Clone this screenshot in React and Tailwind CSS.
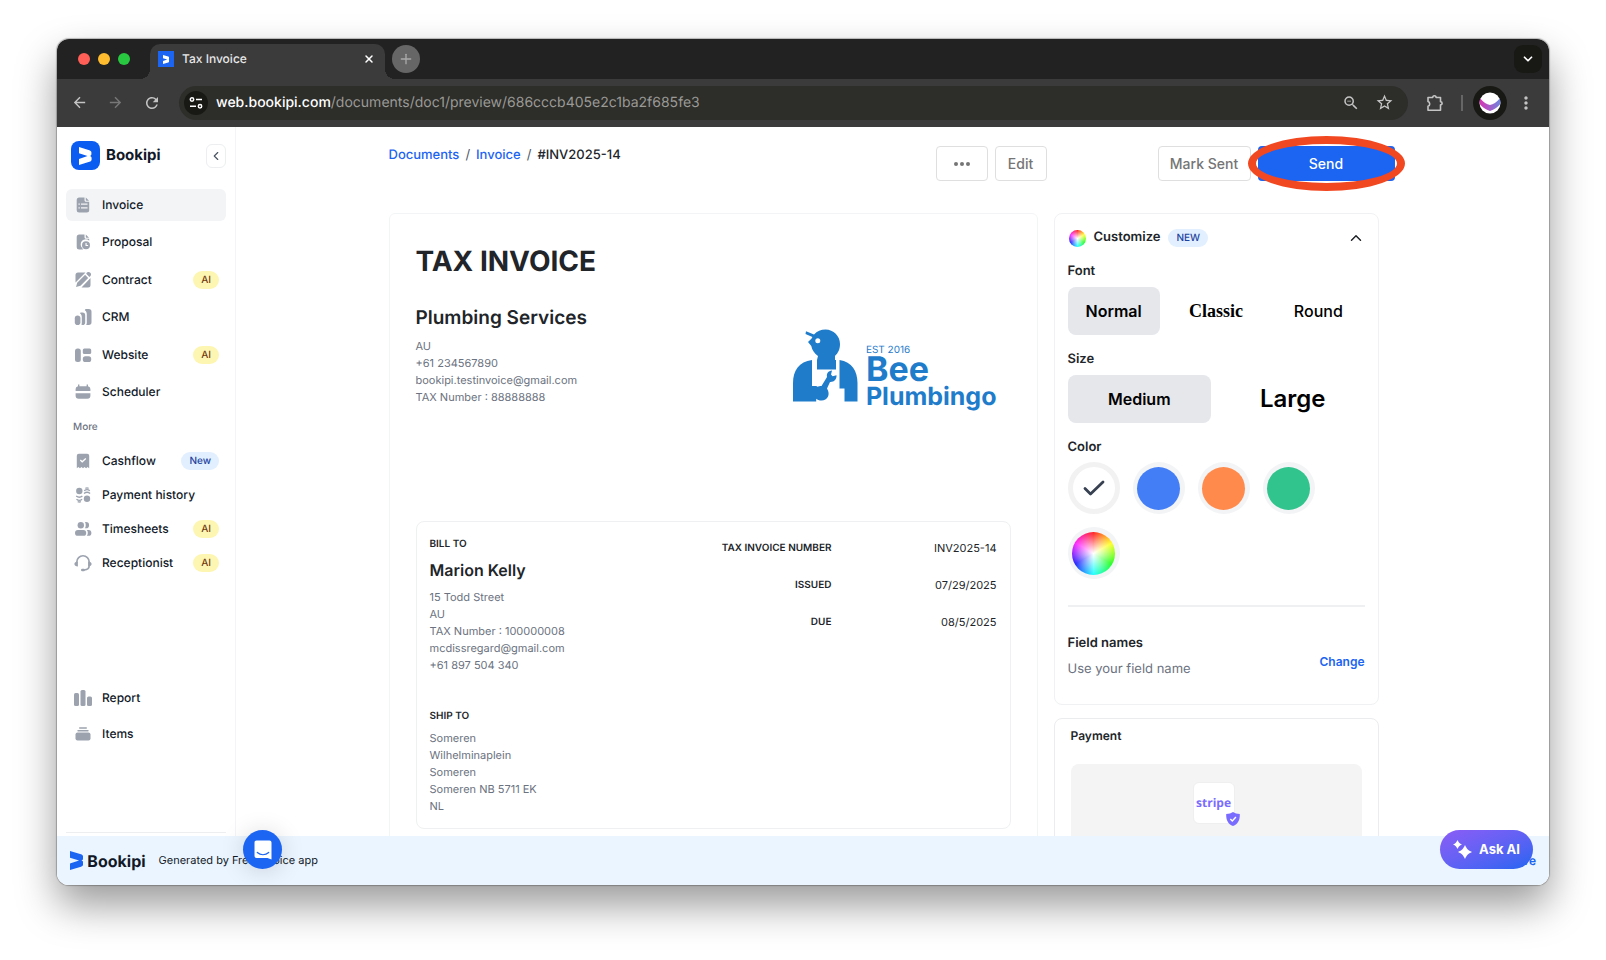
import React from 'react';
import {ChevronDown, ChevronLeft, ChevronUp, X, Plus} from 'lucide-react';
import {MdArrowBack, MdArrowForward, MdRefresh, MdStarOutline, MdMoreVert, MdZoomOut} from 'react-icons/md';

const icons = {
  invoice: (
    <>
      <path d="M5.2 1.5h5.3v2.8c0 .9.6 1.5 1.5 1.5h3.2v8.2a2.5 2.5 0 0 1-2.5 2.5H5.2A2.5 2.5 0 0 1 2.7 14V4a2.5 2.5 0 0 1 2.5-2.500z"/>
      <path d="M11.800 1.500l3.200 3.200h-2.400a.8.8 0 0 1-.8-.8z"/>
      <path d="M4.500 8.200h1.300M7 8.200h6.500M4.500 11.800h1.300M7 11.800h6.500" stroke="#f3f4f6" strokeWidth="1.200" fill="none"/>
    </>
  ),
  proposal: (
    <>
      <path d="M5.200 1.500h5.300v2.800c0 .9.600 1.500 1.500 1.500h3.200v1.900a5 5 0 0 0-7 7.300l.9 1.500H5.200A2.500 2.500 0 0 1 2.700 14V4a2.500 2.500 0 0 1 2.500-2.500z"/>
      <path d="M11.800 1.500l3.200 3.200h-2.400a.8.8 0 0 1-.8-.8z"/>
      <path fillRule="evenodd" d="M12 8.300a4 4 0 1 1 0 8 4 4 0 0 1 0-8zm-.5 1.700v2.900h2.600v-1h-1.500V10z"/>
    </>
  ),
  contract: (
    <>
      <path d="M4 1.500h7.500L1.500 11.500V4A2.500 2.500 0 0 1 4 1.500zM16.500 7v7a2.500 2.500 0 0 1-2.500 2.500H7.500z"/>
      <path d="M2 16l1.300-4.500 7.700-7.700 3.200 3.200-7.700 7.700z"/>
      <path d="M1.500 12.700L12 2.200M6.300 16.500L16.500 6.300" stroke="#fff" strokeWidth="1" fill="none"/>
      <path d="M12.200 2.700a2.500 2.500 0 1 1 3.200 3.200z"/>
    </>
  ),
  crm: (
    <>
      <rect x=".8" y="7.500" width="5.600" height="9.500" rx="2.800"/>
      <path d="M6.500 4.500h2A2.700 2.700 0 0 1 11.200 7.200v7A2.700 2.700 0 0 1 8.500 17c-.7 0-1.200-.2-1.200-.2.500-.8.500-1.500.5-2.500V9.500C7.800 7.500 7.300 6.300 6 5.600z"/>
      <path d="M11.500 1h3.300a2.700 2.700 0 0 1 2.700 2.700v10.600a2.700 2.700 0 0 1-2.700 2.700h-2.600c.5-.8.600-1.500.600-2.500V6.500c0-2-.500-3.400-2-4.300z"/>
    </>
  ),
  website: (
    <>
      <rect x="1" y="2.500" width="5.800" height="13.500" rx="2.500"/>
      <rect x="8.800" y="2.500" width="8.400" height="5.500" rx="1.500"/>
      <rect x="8.800" y="10.200" width="8.400" height="5.800" rx="2.600"/>
    </>
  ),
  scheduler: (
    <>
      <path d="M4 1.500h1.400v1.700h7.200V1.500H14v1.800a2.800 2.800 0 0 1 2.400 2.800v2H1.600v-2A2.800 2.800 0 0 1 4 3.300z"/>
      <path d="M1.600 10.200h14.800v2.500a3 3 0 0 1-3 3H4.600a3 3 0 0 1-3-3z"/>
    </>
  ),
  cashflow: (
    <>
      <path d="M4.800 1.800h8.400a2 2 0 0 1 2 2v12.400l-1.600-1.200-1.500 1.200-1.600-1.200L9 16.200 7.500 15l-1.600 1.200L4.400 15l-1.600 1.200V3.800a2 2 0 0 1 2-2z"/>
      <path d="M6.300 8l1.900 1.800L11.800 6.600" stroke="#fff" strokeWidth="1.300" fill="none"/>
    </>
  ),
  history: (
    <>
      <circle cx="5.300" cy="5" r="3.200"/>
      <circle cx="13" cy="12.700" r="3.200"/>
      <path d="M2.200 10c2 1.600 4.300 1.600 6.200 0M2.500 13.200c1.800 1.400 3.900 1.400 5.600 0M3.700 15.600c1 .5 2.200.5 3.200 0M10 7.500c2-1.600 4.200-1.600 6.100 0M10.200 4.700c1.800-1.400 3.900-1.400 5.600 0M11.400 2.300c1-.5 2.200-.5 3.200 0" fill="none" stroke="currentColor" strokeWidth="1.300"/>
    </>
  ),
  timesheets: (
    <>
      <circle cx="6.800" cy="5.200" r="3.200"/>
      <path d="M11 2.100h1a3.100 3.100 0 0 1 0 6.200h-1c1-1.700 1-4.500 0-6.200z"/>
      <rect x="1" y="10" width="11.200" height="5.800" rx="2.900"/>
      <path d="M12.800 10h1.700a2.900 2.900 0 0 1 0 5.800h-1.700c1.400-1.600 1.400-4.200 0-5.800z"/>
    </>
  ),
  receptionist: (
    <>
      <path d="M2.800 9V8a6.200 6.200 0 0 1 12.400 0v3.500c0 2.500-2 4.300-5 4.500" fill="none" stroke="currentColor" strokeWidth="1.600"/>
      <path d="M3.900 7.500v5C1.700 12.500.4 11.300.4 10s1.300-2.500 3.500-2.500zM14.100 7.500v5c2.200 0 3.500-1.200 3.500-2.500s-1.300-2.500-3.500-2.500z"/>
      <rect x="7" y="14.800" width="4" height="2.400" rx="1.200"/>
    </>
  ),
  report: (
    <>
      <rect x="0" y="4" width="5" height="13" rx="1.500"/>
      <rect x="6.500" y="1" width="5" height="16" rx="1.500"/>
      <rect x="13" y="7.500" width="5" height="9.500" rx="1.500"/>
    </>
  ),
  items: (
    <>
      <rect x="5" y="2.300" width="8" height="1.500" rx=".7"/>
      <rect x="3.300" y="4.900" width="11.400" height="1.600" rx=".8"/>
      <rect x="1.500" y="7.500" width="15" height="8" rx="2"/>
    </>
  )
}

const mainMenu = [
  {title: 'Invoice', icon: 'invoice', active: true},
  {title: 'Proposal', icon: 'proposal'},
  {title: 'Contract', icon: 'contract', badge: 'AI'},
  {title: 'CRM', icon: 'crm'},
  {title: 'Website', icon: 'website', badge: 'AI'},
  {title: 'Scheduler', icon: 'scheduler'}
]

const moreMenu = [
  {title: 'Cashflow', icon: 'cashflow', badge: 'New'},
  {title: 'Payment history', icon: 'history'},
  {title: 'Timesheets', icon: 'timesheets', badge: 'AI'},
  {title: 'Receptionist', icon: 'receptionist', badge: 'AI'}
]

const bottomMenu = [
  {title: 'Report', icon: 'report'},
  {title: 'Items', icon: 'items'}
]

const swatches = [
  {name: 'Blue', color: 'bg-[#437ef7]'},
  {name: 'Orange', color: 'bg-[#ff8a4c]'},
  {name: 'Green', color: 'bg-[#31c48d]'},
  {name: 'Custom', color: 'bg-[radial-gradient(closest-side,white,transparent),conic-gradient(#f22,#ff2_60deg,#2f2_120deg,#2ff_180deg,#22f_240deg,#f2f_300deg,#f22)]'}
]

const BookipiMark = ({className}) => (
  <svg viewBox="0 0 14 20" className={className} fill="currentColor" aria-hidden="true">
    <path d="M0 0l11.500 3.500c1.500.5 2.300 1.300 2.300 2.700v1.600c0 1.100-.6 1.800-1.700 2.200 1.200.3 1.900 1.100 1.900 2.200v1.600c0 1.400-.9 2.300-2.400 2.700L0 20v-6.800L9.500 10 0 7z"/>
  </svg>
)

const MenuItem = ({item, height}) => (
  <a href="#" className={'flex items-center rounded-md pl-2 pr-[7px] ' + height + (item.active ? ' bg-[#f3f4f6]' : '')}>
    <svg viewBox="0 0 18 18" className="size-[18px] text-[#9ca3af]" fill="currentColor" aria-hidden="true">{icons[item.icon]}</svg>
    <span className="ml-[10px] text-[12px] font-medium text-[#111928]">{item.title}</span>
    {
      item.badge &&
      <span className={'ml-auto rounded-full px-2 h-[18px] leading-[18px] text-[10px] font-medium ' + (item.badge === 'AI' ? 'bg-[#fdf6b2] text-[#723b13]' : 'bg-[#e1effe] text-[#1e429f]')}>{item.badge}</span>
    }
  </a>
)

const Browser = () => (
  <>
    <div className="flex h-10 shrink-0 bg-[#222] text-white">
      <div className="flex items-center gap-2 pl-[21px] pr-5">
        <span className="size-3 rounded-full bg-[#ff5f57]"/>
        <span className="size-3 rounded-full bg-[#febc2e]"/>
        <span className="size-3 rounded-full bg-[#28c840]"/>
      </div>
      <div className="relative mt-[5px] flex w-[235px] items-center rounded-t-[10px] bg-[#3b3b3b] pb-[5px] pl-2 pr-[10px]">
        <span className="absolute -left-[10px] bottom-0 size-[10px] bg-[radial-gradient(circle_at_0_0,transparent_10px,#3b3b3b_10px)]"/>
        <span className="absolute -right-[10px] bottom-0 size-[10px] bg-[radial-gradient(circle_at_100%_0,transparent_10px,#3b3b3b_10px)]"/>
        <span className="flex size-4 items-center justify-center bg-[#1c64f2]">
          <BookipiMark className="h-[9px]"/>
        </span>
        <span className="ml-2 text-[12px] font-medium text-[#e8e8e8]">Tax Invoice</span>
        <button className="ml-auto" aria-label="Close tab"><X size={12} strokeWidth={3}/></button>
      </div>
      <button className="ml-[7px] mt-[6px] flex size-7 items-center justify-center rounded-full bg-[#666] text-[#aaa]" aria-label="New tab"><Plus size={16}/></button>
      <button className="ml-auto mr-[7px] mt-[6px] flex size-7 items-center justify-center rounded-[9px] bg-[#181914]" aria-label="Search tabs"><ChevronDown size={14} strokeWidth={3}/></button>
    </div>
    <div className="flex h-12 shrink-0 items-center bg-[#3b3b3b] pb-px pl-[14px] pr-[13px] text-[#c4c4c4]">
      <button aria-label="Back"><MdArrowBack size={17}/></button>
      <button className="ml-[19px] text-[#777]" aria-label="Forward"><MdArrowForward size={17}/></button>
      <button className="ml-[19px] mr-[18px]" aria-label="Reload"><MdRefresh size={18}/></button>
      <div className="flex h-[34px] flex-1 items-center rounded-full bg-[#2d2d29] pl-[5px] pr-[14px]">
        <span className="flex size-6 items-center justify-center rounded-full bg-[#181914] text-white">
          <svg width="14" height="14" viewBox="0 0 14 14" fill="none" stroke="currentColor" strokeWidth="1.500" aria-hidden="true">
            <circle cx="3" cy="3.500" r="1.700"/><path d="M7 3.500h6M1 10.300h6"/><circle cx="11" cy="10.300" r="1.700"/>
          </svg>
        </span>
        <span className="ml-2 flex-1 text-[14px] text-[#9a9a96]"><span className="font-medium text-white">web.bookipi.com</span>/documents/doc1/preview/686cccb405e2c1ba2f685fe3</span>
        <MdZoomOut size={18}/>
        <MdStarOutline size={19} className="ml-[15px]"/>
      </div>
      <button className="ml-[18px]" aria-label="Extensions">
        <svg width="18" height="18" viewBox="0 0 18 18" fill="none" stroke="currentColor" strokeWidth="1.600" strokeLinejoin="round" aria-hidden="true">
          <path d="M2 3.500h4.700a1.700 1.700 0 0 1 3.400 0h4.400v4.200a1.600 1.600 0 0 1 0 3.200v5.300H2v-4a2.400 2.400 0 0 0 0-4.600z"/>
        </svg>
      </button>
      <span className="ml-[17px] h-4 w-[2px] bg-[#666]"/>
      <button className="ml-[10px] flex size-[34px] items-center justify-center rounded-full bg-[#181914]" aria-label="Profile">
        <svg width="22" height="22" viewBox="0 0 22 22" aria-hidden="true">
          <defs>
            <linearGradient id="profile"><stop stopColor="#d834b4"/><stop offset="1" stopColor="#6f86dc"/></linearGradient>
          </defs>
          <circle cx="11" cy="11" r="10.500" fill="#fff"/>
          <path d="M1.300 6.500c3 3.500 6.500 6 9.700 6.500 3.200-.5 6.700-3 9.700-6.500.8 2 .8 4 .2 6-2.500 3-5.500 5-9.900 6.500C6.600 17.500 3.600 15.500 1.100 12.500c-.6-2-.6-4 .2-6z" fill="url(#profile)"/>
        </svg>
      </button>
      <button className="ml-[9px]" aria-label="Menu"><MdMoreVert size={20}/></button>
    </div>
  </>
)

const Sidebar = () => (
  <aside className="flex w-[179px] shrink-0 flex-col border-r border-[#f3f4f6] px-[9px] pb-[3px]">
    <div className="mt-[14px] flex h-[29px] items-center pl-[5px]">
      <span className="flex size-[29px] items-center justify-center rounded-lg bg-[#0b5cf0] text-white">
        <BookipiMark className="h-[18px]"/>
      </span>
      <span className="ml-[6px] text-[15px] font-bold text-[#111928]">Bookipi</span>
      <button className="ml-auto flex h-6 w-5 items-center justify-center rounded-md border border-[#eceef0] text-[#4b5563]" aria-label="Collapse"><ChevronLeft size={14}/></button>
    </div>
    <nav className="mt-[19px] flex h-[219px] flex-col justify-between">
      {mainMenu.map((item, key) => <MenuItem key={key} item={item} height="h-8"/>)}
    </nav>
    <p className="mt-[11px] pl-[7px] text-[10px] leading-4 font-medium text-[#6b7280]">More</p>
    <nav className="mt-[9px] flex flex-col">
      {moreMenu.map((item, key) => <MenuItem key={key} item={item} height="h-[34px]"/>)}
    </nav>
    <nav className="mt-auto mb-20 flex flex-col">
      {bottomMenu.map((item, key) => <MenuItem key={key} item={item} height="h-9"/>)}
    </nav>
    <hr className="border-[#eceef0]"/>
  </aside>
)

const BeeLogo = () => (
  <div className="flex items-end text-[#1f7ccb]">
    <svg width="65" height="73" viewBox="0 0 65 73" fill="currentColor" className="mb-[7px]" aria-hidden="true">
      <path d="M13 2.200l8 3.200C24 2 28 .5 32.500.5c8 0 14.500 6.500 14.500 14.500 0 5.500-2 9-5 12v4h1v9.500H24V31l1-4c-3.500-2.500-6-6-6.700-10L15 13l3.600-3.500.8-1.600L12.500 5z"/>
      <circle cx="24.800" cy="11.800" r="2.500" fill="#fff"/>
      <path d="M0 72.500V54C0 42 6 32.500 19 31v26h4c.6.2 1 .5 1.400.8.800-.500 2.700-.800 4.100-.800l5.500-9c-.6-3.300 1.200-6.300 5-6.500l-1 4 1.600 1.800 3.900-1c.3 4.200-2.700 7-6.500 6.700L34 59.500c3.800 6.200.500 12-5.500 12-2.400 0-4-.600-5.300-1.800v2.800z"/>
      <path d="M46.500 31C59 33 64.500 42 64.500 54v18.500h-13V59.500h-5z"/>
    </svg>
    <div className="ml-2 font-bold">
      <p className="text-[10px] leading-[10px] font-normal">EST 2016</p>
      <p className="text-[34px] leading-[30px]">Bee</p>
      <p className="text-[25px] leading-[24px]">Plumbingo</p>
    </div>
  </div>
)

const Invoice = () => (
  <section className="min-w-0 flex-1 rounded-md border border-[#f3f4f6] px-[26px] pt-[29px] pb-24 text-[#212529]">
    <h1 className="text-[28px] leading-9 font-bold">TAX INVOICE</h1>
    <div className="mt-[25px] flex h-[217px] justify-between">
      <div>
        <h2 className="text-[19px] leading-7 font-semibold">Plumbing Services</h2>
        <div className="mt-[6px] text-[11px] leading-[17px] text-[#6b7280]">
          <p>AU</p>
          <p>+61 234567890</p>
          <p>bookipi.testinvoice@gmail.com</p>
          <p>TAX Number : 88888888</p>
        </div>
      </div>
      <div className="mt-[25px] mr-[14px]">
        <BeeLogo/>
      </div>
    </div>
    <div className="flex justify-between rounded-lg border border-[#eff0f2] px-[13px] pt-[14px] pb-[13px]">
      <div className="text-[11px] leading-[17px] text-[#6b7280]">
        <h3 className="text-[10px] leading-4 font-semibold text-[#212529]">BILL TO</h3>
        <h4 className="mt-[6px] text-[16px] leading-6 font-semibold text-[#212529]">Marion Kelly</h4>
        <div className="mt-[7px]">
          <p>15 Todd Street</p>
          <p>AU</p>
          <p>TAX Number : 100000008</p>
          <p>mcdissregard@gmail.com</p>
          <p>+61 897 504 340</p>
        </div>
        <h3 className="mt-[34px] text-[10px] leading-4 font-semibold text-[#212529]">SHIP TO</h3>
        <div className="mt-[6px]">
          <p>Someren</p>
          <p>Wilhelminaplein</p>
          <p>Someren</p>
          <p>Someren NB 5711 EK</p>
          <p>NL</p>
        </div>
      </div>
      <dl className="grid grid-cols-[auto_165px] content-start items-center gap-y-[17px] pt-[2px] text-right text-[11px] leading-5">
        <dt className="text-[10px] leading-5 font-semibold">TAX INVOICE NUMBER</dt>
        <dd>INV2025-14</dd>
        <dt className="text-[10px] leading-5 font-semibold">ISSUED</dt>
        <dd>07/29/2025</dd>
        <dt className="text-[10px] leading-5 font-semibold">DUE</dt>
        <dd>08/5/2025</dd>
      </dl>
    </div>
  </section>
)

const Customize = () => (
  <section className="rounded-lg border border-[#f0f1f3] px-[13px] pt-[15px] pb-[25px] text-[13px] text-[#212529]">
    <div className="flex h-[18px] items-center">
      <span className="ml-px size-[17px] rounded-full bg-[radial-gradient(closest-side,white,transparent),conic-gradient(#f22,#ff2_60deg,#2f2_120deg,#2ff_180deg,#22f_240deg,#f2f_300deg,#f22)]"/>
      <h2 className="ml-2 font-semibold">Customize</h2>
      <span className="ml-2 h-[18px] rounded-full bg-[#e1effe] px-2 text-[10px] leading-[18px] font-medium text-[#1e429f]">NEW</span>
      <button className="ml-auto" aria-label="Toggle customize"><ChevronUp size={18}/></button>
    </div>
    <h3 className="mt-[14px] leading-5 font-semibold">Font</h3>
    <div className="mt-[6px] grid grid-cols-3 gap-[10px] text-[16px] text-black">
      <button className="h-12 rounded-lg bg-[#e5e7eb] font-semibold">Normal</button>
      <button className="h-12 rounded-lg font-['Liberation_Serif',serif] text-[18px] font-bold">Classic</button>
      <button className="h-12 rounded-lg font-medium">Round</button>
    </div>
    <h3 className="mt-[14px] leading-5 font-semibold">Size</h3>
    <div className="mt-[6px] grid grid-cols-2 gap-[10px] text-black">
      <button className="h-12 rounded-lg bg-[#e5e7eb] text-[16px] font-semibold">Medium</button>
      <button className="h-12 rounded-lg text-[24px] font-semibold">Large</button>
    </div>
    <h3 className="mt-[14px] leading-5 font-semibold">Color</h3>
    <div className="mt-[5px] flex flex-wrap gap-[13px]">
      <button className="flex size-[52px] items-center justify-center rounded-full border-[5px] border-[#f2f2f2] bg-white" aria-label="White">
        <svg width="22" height="16" viewBox="0 0 22 16" fill="none" stroke="#374151" strokeWidth="2.800" strokeLinecap="round" strokeLinejoin="round" aria-hidden="true"><path d="M2 8.500l5.500 5.500L20 2"/></svg>
      </button>
      {
        swatches.map((item, key) => (
          <button key={key} className="flex size-[52px] items-center justify-center rounded-full bg-[#f3f4f6]" aria-label={item.name}>
            <span className={'size-[43px] rounded-full ' + item.color}/>
          </button>
        ))
      }
    </div>
    <hr className="mt-[26px] border-t-2 border-[#eff0f2]"/>
    <div className="mt-[26px] flex items-end justify-between">
      <div>
        <h3 className="leading-5 font-semibold">Field names</h3>
        <p className="mt-[6px] leading-5 text-[#6b7280]">Use your field name</p>
      </div>
      <button className="mb-2 text-[12px] font-semibold text-[#1c64f2]">Change</button>
    </div>
  </section>
)

const Payment = () => (
  <section className="rounded-lg border border-[#ebecee] px-4 pt-2 pb-4">
    <h2 className="text-[12px] leading-[18px] font-semibold text-[#212529]">Payment</h2>
    <div className="mt-[19px] flex h-40 justify-center rounded-lg bg-[#f4f4f4] pt-[18px]">
      <div className="pr-[5px]">
        <div className="relative flex size-[42px] items-center justify-center rounded-md border border-[#efefef] bg-white">
          <span className="font-['Open_Sans',sans-serif] text-[12px] font-bold text-[#7a6cff]">stripe</span>
          <svg width="14" height="14" viewBox="0 0 14 14" className="absolute -right-[6px] -bottom-[3px]" aria-hidden="true">
            <path d="M7 0c1.800 1.300 4 2 6.800 2C14 8 12 12 7 14 2 12 0 8 .2 2 3 2 5.200 1.300 7 0z" fill="#7a6cff"/>
            <path d="M4.300 7l2 1.900L9.900 5" fill="none" stroke="#fff" strokeWidth="1.400"/>
          </svg>
        </div>
      </div>
    </div>
  </section>
)

const App = () => {
  return (
    <div className="flex h-screen overflow-hidden bg-white px-[57px] pt-[39px] pb-[75px] font-['Inter',sans-serif] [text-rendering:geometricPrecision]">
      <div className="flex w-full flex-col rounded-xl shadow-[0_0_1px_1px_rgba(0,0,0,0.25),0_20px_40px_rgba(0,0,0,0.4)]">
        <div className="relative flex min-h-0 flex-1 flex-col overflow-hidden rounded-xl bg-white">
          <Browser/>
          <div className="flex min-h-0 flex-1">
            <Sidebar/>
            <main className="min-w-0 flex-1 overflow-hidden pr-[2px]">
              <div className="mx-auto w-full max-w-[1006px] pt-[19px]">
                <div className="flex h-[35px] justify-between">
                  <nav className="flex h-5 items-center gap-[6px] text-[13px] font-medium text-[#212529]">
                    <a href="#" className="text-[#1c64f2]">Documents</a>
                    <span className="font-normal text-[#4b5563]">/</span>
                    <a href="#" className="text-[#1c64f2]">Invoice</a>
                    <span className="font-normal text-[#4b5563]">/</span>
                    <span>#INV2025-14</span>
                  </nav>
                  <div className="flex w-[459px] gap-[7px] text-[14px] font-medium text-[#757575]">
                    <button className="flex w-[52px] items-center justify-center gap-[2px] rounded-sm border border-[#dfdfdf]" aria-label="More actions">
                      <span className="size-1 rounded-full bg-[#757575]"/>
                      <span className="size-1 rounded-full bg-[#757575]"/>
                      <span className="size-1 rounded-full bg-[#757575]"/>
                    </button>
                    <button className="w-[52px] rounded-sm border border-[#dfdfdf]">Edit</button>
                    <button className="ml-auto w-[93px] rounded-sm border border-[#dfdfdf]">Mark Sent</button>
                    <div className="relative flex w-[137px]">
                      <button className="flex-1 rounded-sm bg-[#1c64f2] text-white">Send</button>
                      <span className="pointer-events-none absolute -inset-[10px] rounded-[50%] border-8 border-[#f24822]"/>
                    </div>
                  </div>
                </div>
                <div className="mt-8 flex gap-4 pr-4">
                  <Invoice/>
                  <div className="flex w-[325px] shrink-0 flex-col gap-[13px]">
                    <Customize/>
                    <Payment/>
                  </div>
                </div>
              </div>
            </main>
          </div>
          <footer className="flex h-[49px] shrink-0 items-center bg-[#ebf5ff] px-[13px] text-[12px] text-[#111928]">
            <BookipiMark className="h-[19px] text-[#1c64f2]"/>
            <span className="ml-1 text-[16px] font-bold">Bookipi</span>
            <span className="ml-[13px] text-[11px]">Generated by Free Invoice app</span>
            <a href="#" className="ml-auto font-semibold text-[#1c64f2]">Remove</a>
          </footer>
          <button className="absolute bottom-4 left-[186px] flex size-[39px] items-center justify-center rounded-full bg-[#1c64f2] shadow-[0_2px_24px_rgba(0,0,0,0.15)]" aria-label="Open chat">
            <svg width="18" height="20" viewBox="0 0 18 20" aria-hidden="true">
              <path d="M2.500.5h13A2 2 0 0 1 17.500 2.500V19.500L13.500 18h-11A2 2 0 0 1 .5 16V2.500a2 2 0 0 1 2-2z" fill="#fff"/>
              <path d="M3.300 12.500c3.300 3 8.100 3 11.400 0" fill="none" stroke="#1c64f2" strokeWidth="1.200" strokeLinecap="round"/>
            </svg>
          </button>
          <button className="absolute right-4 bottom-4 flex h-[39px] w-[93px] items-center justify-center gap-[7px] rounded-full bg-linear-to-br from-[#8b5cf6] to-[#1c64f2] text-[13px] font-bold text-white">
            <svg width="19" height="19" viewBox="0 0 19 19" fill="currentColor" aria-hidden="true">
              <path d="M12 5c1.500 3.500 3 5.300 7 7-4 1.700-5.500 3.500-7 7-1.500-3.500-3-5.300-7-7 4-1.700 5.500-3.500 7-7z"/>
              <path d="M4.500 0c1 2.200 2 3.400 4.500 4.500C6.500 5.600 5.500 6.800 4.500 9 3.500 6.800 2.500 5.600 0 4.500 2.500 3.400 3.500 2.200 4.500 0z"/>
            </svg>
            Ask AI
          </button>
        </div>
      </div>
    </div>
  );
};

export default App;
